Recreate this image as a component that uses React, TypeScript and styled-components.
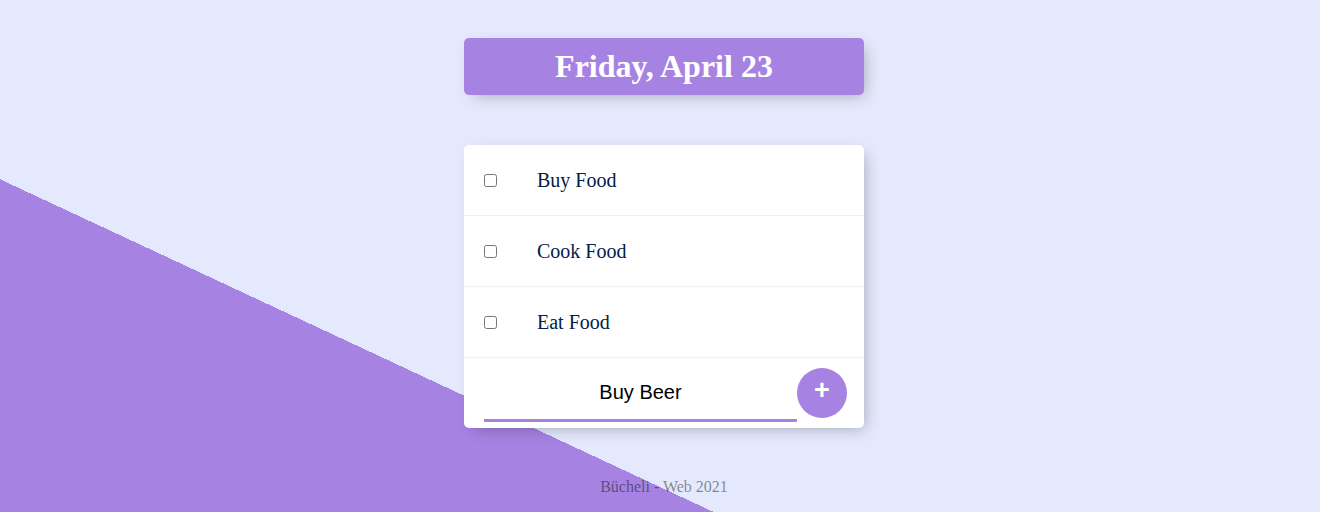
import React from "react";
import styled, { createGlobalStyle } from "styled-components";

const GlobalStyle = createGlobalStyle`
  html, body {
    margin: 0;
    padding: 0;
  }
  body {
    font-family: "Liberation Serif", "Times New Roman", serif;
    background-color: #e4e9fd;
  }
`;

const Page = styled.div`
  height: 512px;
  overflow: hidden;
  box-sizing: border-box;
  padding: 38px 0 0 8px;
  background-color: #e4e9fd;
  background-image: linear-gradient(25deg, #a683e3 50%, #e4e9fd 50%);
  background-size: 100% 974px;
  background-repeat: no-repeat;
  display: flex;
  flex-direction: column;
  align-items: center;
`;

const Card = styled.div`
  width: 400px;
  border-radius: 5px;
  background: #ffffff;
  box-shadow: 5px 5px 15px -5px rgba(0, 0, 0, 0.3);
`;

const Heading = styled(Card)`
  background: #a683e3;
  text-align: center;
`;

const Title = styled.h1`
  margin: 0;
  padding: 10px;
  font-size: 32px;
  line-height: 37px;
  font-weight: bold;
  color: #ffffff;
`;

const List = styled(Card)`
  margin-top: 50px;
`;

const Item = styled.div`
  min-height: 70px;
  display: flex;
  align-items: center;
  border-bottom: 1px solid #f1f1f1;
`;

const Check = styled.input`
  margin: 20px;
  width: 13px;
  height: 13px;
`;

const Label = styled.p`
  margin: 0;
  padding: 20px;
  font-size: 20px;
  line-height: 23px;
  font-weight: 200;
  color: #00204a;
`;

const Form = styled.form`
  height: 70px;
  margin-left: 20px;
  display: flex;
  align-items: center;
`;

const TextInput = styled.input`
  box-sizing: border-box;
  width: 313px;
  height: 60px;
  padding: 0;
  border: none;
  background: transparent;
  text-align: center;
  font-family: "Liberation Sans", Arial, sans-serif;
  font-size: 20px;
  font-weight: 200;
  color: #000000;
  outline: none;
  box-shadow: inset 0 -3px 0 0 #a683e3;
  margin-top: -2px;
`;

const AddButton = styled.button`
  box-sizing: border-box;
  width: 50px;
  height: 50px;
  border-radius: 50%;
  border: 0;
  background-color: #a683e3;
  color: #ffffff;
  font-family: "Liberation Sans", Arial, sans-serif;
  font-size: 27px;
  font-weight: bold;
  line-height: 27px;
  padding: 0 0 6px 0;
  display: flex;
  align-items: center;
  justify-content: center;
`;

const Footer = styled.footer`
  margin-top: 50px;
  font-size: 16px;
  line-height: 18px;
  color: rgba(0, 0, 0, 0.45);
  text-align: center;
`;

const items = ["Buy Food", "Cook Food", "Eat Food"];

export default function App() {
  return (
    <>
      <GlobalStyle />
      <Page>
        <Heading>
          <Title>Friday, April 23</Title>
        </Heading>
        <List>
          {items.map((t) => (
            <Item key={t}>
              <Check type="checkbox" />
              <Label>{t}</Label>
            </Item>
          ))}
          <Form onSubmit={(e) => e.preventDefault()}>
            <TextInput type="text" defaultValue="Buy Beer" autoComplete="off" />
            <AddButton type="submit">+</AddButton>
          </Form>
        </List>
        <Footer>Bücheli - Web 2021</Footer>
      </Page>
    </>
  );
}
